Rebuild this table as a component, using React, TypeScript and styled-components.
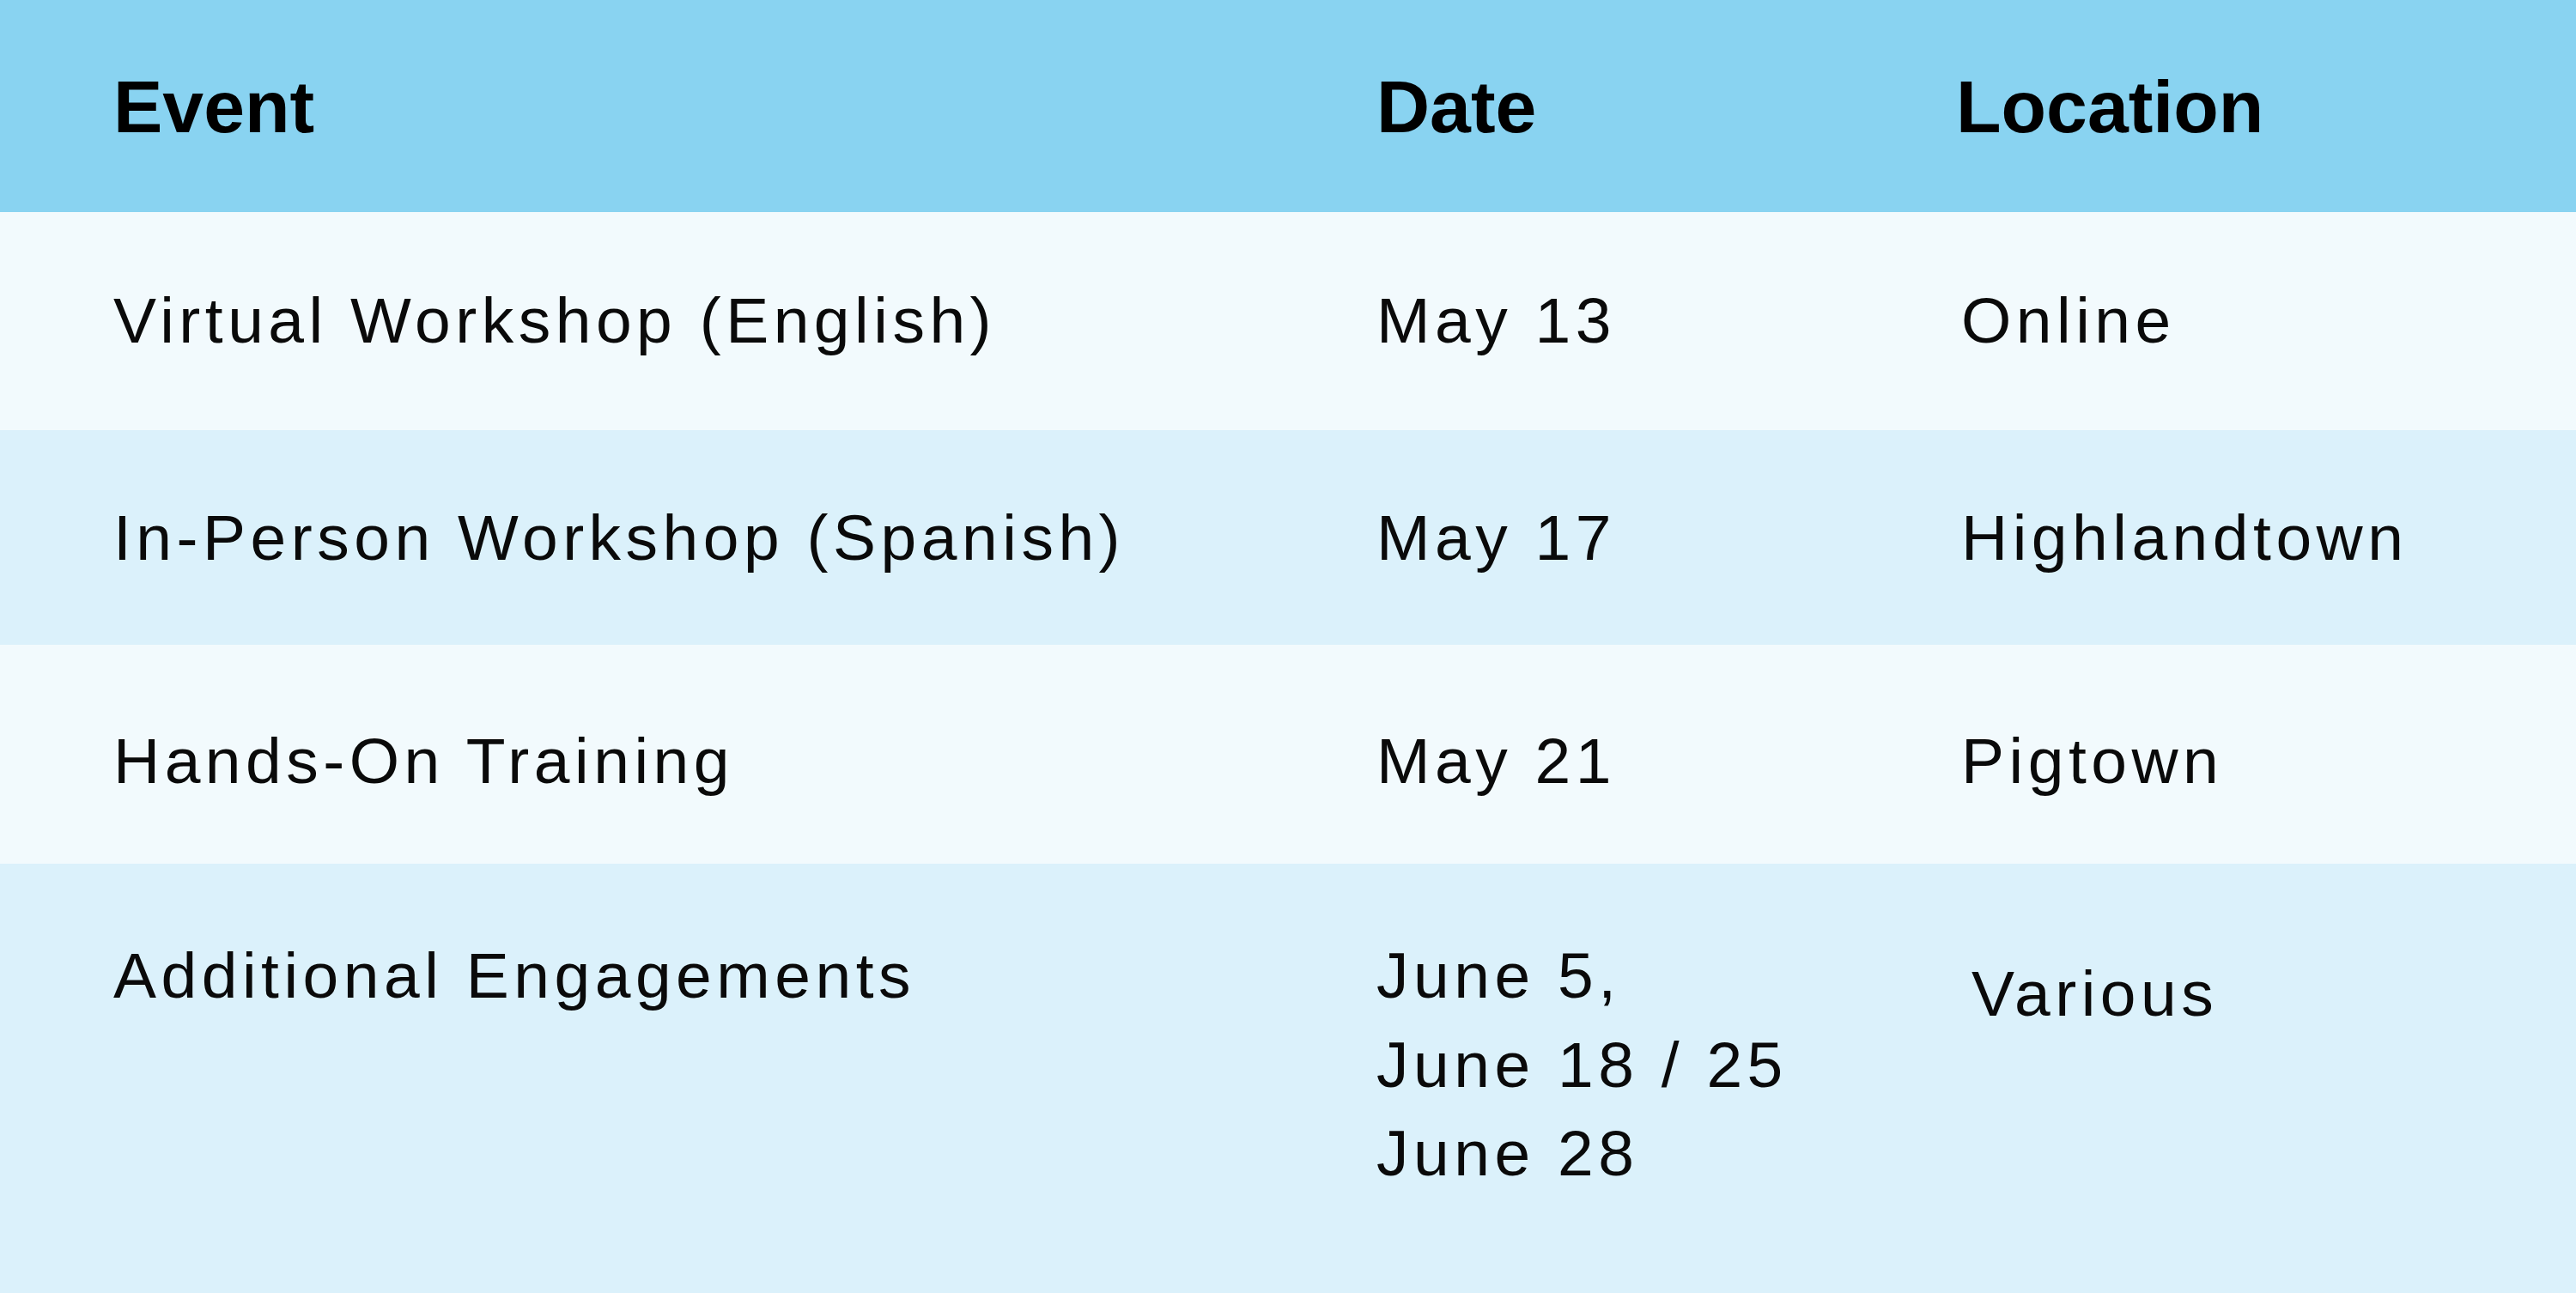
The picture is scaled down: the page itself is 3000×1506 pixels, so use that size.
import React from 'react';
import styled, { createGlobalStyle } from 'styled-components';

const GlobalStyle = createGlobalStyle`
  html,
  body {
    margin: 0;
    padding: 0;
    background: #dbf1fb;
  }

  body {
    font-family: 'Liberation Sans', Arial, sans-serif;
    color: #0a0a0a;
  }
`;

const Table = styled.div`
  width: 3000px;
  height: 1506px;
  overflow: hidden;
  display: flex;
  flex-direction: column;
`;

const Row = styled.div<{ $bg: string; $height: number; $pad: number }>`
  display: grid;
  grid-template-columns: 1471px 681px 1fr;
  align-items: start;
  box-sizing: border-box;
  height: ${({ $height }) => $height}px;
  flex-shrink: 0;
  padding: ${({ $pad }) => $pad}px 0 0 132px;
  background: ${({ $bg }) => $bg};
`;

const HeadCell = styled.div<{ $shiftX?: number }>`
  font-size: 86px;
  font-weight: 700;
  line-height: 103px;
  color: #000;
  margin-left: ${({ $shiftX = 0 }) => $shiftX}px;
`;

const Cell = styled.div<{ $shiftX?: number; $shiftY?: number }>`
  font-size: 75px;
  font-weight: 400;
  line-height: 103.5px;
  letter-spacing: 5.5px;
  white-space: nowrap;
  margin-left: ${({ $shiftX = 0 }) => $shiftX}px;
  margin-top: ${({ $shiftY = 0 }) => $shiftY}px;
`;

type Entry = {
  event: string;
  dates: string[];
  location: string;
  bg: string;
  height: number;
  pad: number;
  locShiftX?: number;
  locShiftY?: number;
};

const entries: Entry[] = [
  {
    event: `Virtual Workshop (English)`,
    dates: [`May 13`],
    location: `Online`,
    bg: `#f2fafd`,
    height: 254,
    pad: 75,
  },
  {
    event: `In-Person Workshop (Spanish)`,
    dates: [`May 17`],
    location: `Highlandtown`,
    bg: `#dbf1fb`,
    height: 250,
    pad: 74,
  },
  {
    event: `Hands-On Training`,
    dates: [`May 21`],
    location: `Pigtown`,
    bg: `#f2fafd`,
    height: 255,
    pad: 84,
  },
  {
    event: `Additional Engagements`,
    dates: [`June 5,`, `June 18 / 25`, `June 28`],
    location: `Various`,
    bg: `#dbf1fb`,
    height: 500,
    pad: 79,
    locShiftX: 12,
    locShiftY: 21,
  },
];

const App: React.FC = () => (
  <>
    <GlobalStyle />
    <Table>
      <Row $bg="#89d3f1" $height={247} $pad={73}>
        <HeadCell>Event</HeadCell>
        <HeadCell>Date</HeadCell>
        <HeadCell $shiftX={-6}>Location</HeadCell>
      </Row>
      {entries.map((e) => (
        <Row key={e.event} $bg={e.bg} $height={e.height} $pad={e.pad}>
          <Cell>{e.event}</Cell>
          <Cell>
            {e.dates.map((d) => (
              <div key={d}>{d}</div>
            ))}
          </Cell>
          <Cell $shiftX={e.locShiftX} $shiftY={e.locShiftY}>
            {e.location}
          </Cell>
        </Row>
      ))}
    </Table>
  </>
);

export default App;
